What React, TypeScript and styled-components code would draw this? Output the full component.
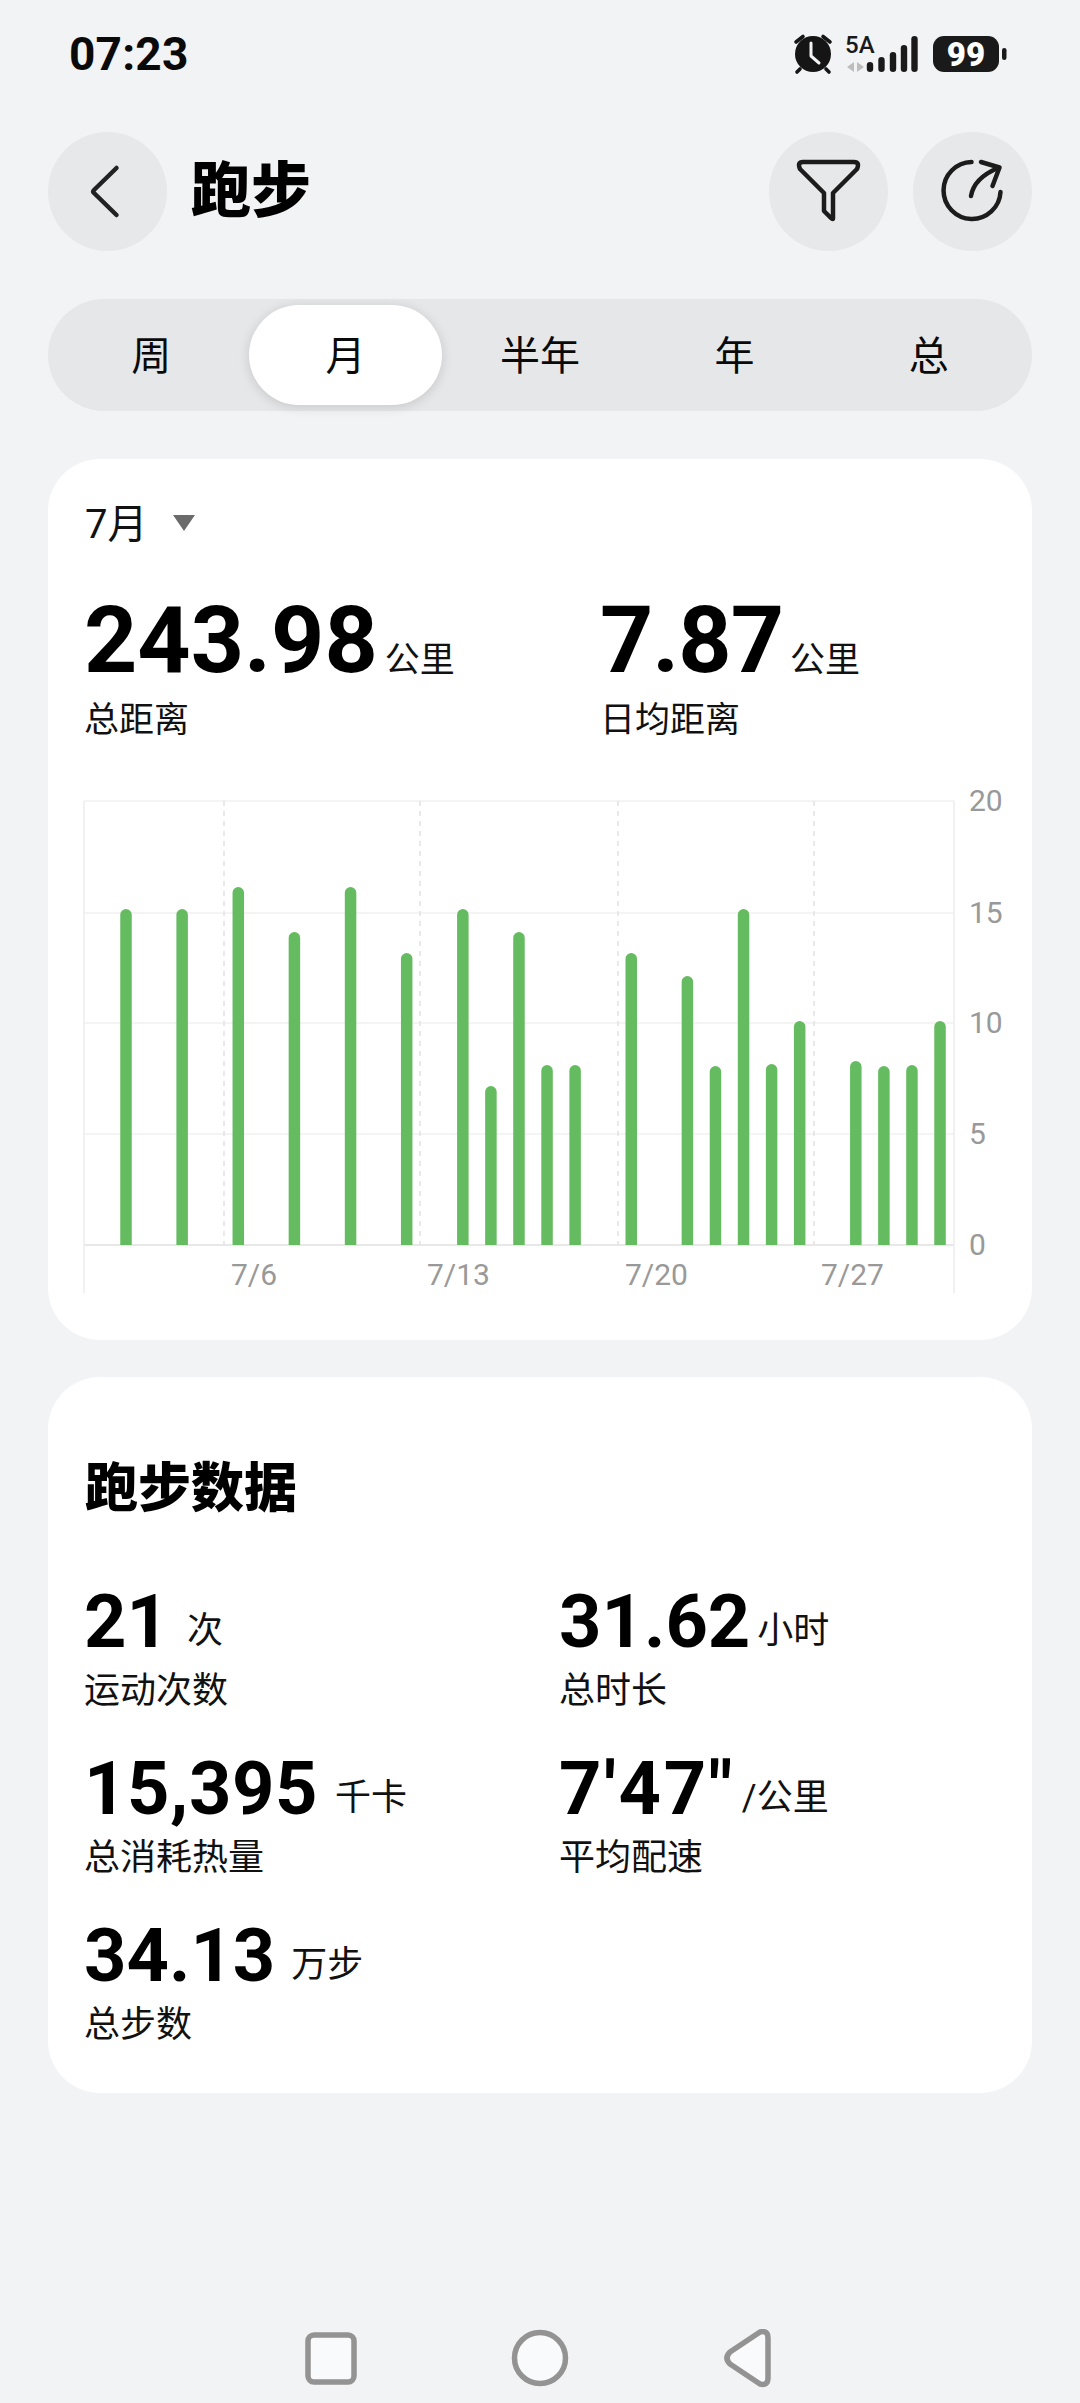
import React from 'react';
import styled, { createGlobalStyle } from 'styled-components';

const GlobalStyle = createGlobalStyle`
  html, body {
    margin: 0;
    padding: 0;
    background: #f2f3f5;
  }
  body {
    font-family: Roboto, "Noto Sans CJK SC", sans-serif;
    color: #000;
  }
`;

const Page = styled.div`
  width: 1080px;
  height: 2403px;
  display: flex;
  flex-direction: column;
  overflow: hidden;
  background: #f2f3f5;
`;

const StatusBar = styled.div`
  height: 132px;
  box-sizing: border-box;
  padding: 34px 74px 0 69px;
  display: flex;
  justify-content: space-between;
  align-items: flex-start;
`;

const Time = styled.div`
  font-size: 46px;
  line-height: 40px;
  font-weight: 700;
  letter-spacing: 0.2px;
  color: #0a0a0a;
`;

const StatusIcons = styled.div`
  display: flex;
  align-items: flex-start;
`;

const Header = styled.div`
  margin: 0 48px;
  height: 119px;
  display: flex;
  align-items: center;
`;

const RoundButton = styled.button`
  width: 119px;
  height: 119px;
  padding: 0;
  border: none;
  border-radius: 50%;
  background: #e7e8ea;
  flex-shrink: 0;
  display: block;
`;

const HeaderTitle = styled.h1`
  margin: 0 0 0 24px;
  font-size: 60px;
  line-height: 70px;
  font-weight: 900;
  flex: 1;
`;

const HeaderActions = styled.div`
  display: flex;
  gap: 25px;
`;

const Tabs = styled.div`
  margin: 48px 48px 0;
  height: 112px;
  box-sizing: border-box;
  padding: 6px;
  border-radius: 56px;
  background: #e6e7e9;
  display: grid;
  grid-template-columns: repeat(5, 1fr);
`;

const Tab = styled.div<{ $active?: boolean }>`
  margin: 0 1px;
  padding-bottom: 5px;
  border-radius: 50px;
  display: flex;
  align-items: center;
  justify-content: center;
  font-size: 40px;
  color: #0a0a0a;
  background: ${props => (props.$active ? '#fff' : 'transparent')};
  box-shadow: ${props => (props.$active ? '0 2px 12px rgba(0, 0, 0, 0.14)' : 'none')};
`;

const Card = styled.section`
  margin: 0 48px;
  background: #fff;
  border-radius: 52px;
  box-sizing: border-box;
`;

const ChartCard = styled(Card)`
  margin-top: 48px;
  height: 881px;
  padding: 40px 16px 0 36px;
`;

const MonthRow = styled.div`
  display: flex;
  align-items: center;
  height: 44px;
  font-size: 40px;
  padding-left: 1px;
  color: #111;
`;

const MonthCaret = styled.span`
  margin: 4px 0 0 26px;
  width: 0;
  height: 0;
  border-left: 11px solid transparent;
  border-right: 11px solid transparent;
  border-top: 16px solid #6b6b6b;
`;

const Summary = styled.div`
  margin-top: 48px;
  display: grid;
  grid-template-columns: 516px 1fr;
`;

const ValueLine = styled.div`
  display: flex;
  align-items: baseline;
`;

const BigValue = styled.span<{ $spacing?: number }>`
  font-size: 93px;
  line-height: 100px;
  font-weight: 700;
  letter-spacing: ${props => props.$spacing ?? 0}px;
`;

const Unit = styled.span<{ $gap?: number }>`
  margin-left: ${props => props.$gap ?? 7}px;
  font-size: 35px;
  line-height: 40px;
  color: #111;
`;

const StatUnit = styled(Unit)`
  font-size: 36px;
  transform: translateY(-4px);
`;

const Label = styled.div`
  font-size: 36px;
  line-height: 44px;
  color: #111;
`;

const SummaryLabel = styled(Label)`
  margin-top: 8px;
  font-size: 35px;
`;

const ChartSvg = styled.svg`
  display: block;
  margin-top: 47px;
  overflow: visible;
`;

const AxisText = styled.text`
  font-family: Roboto, sans-serif;
  font-size: 30px;
  fill: #999;
`;

const DataCard = styled(Card)`
  margin-top: 37px;
  height: 716px;
  padding: 80px 36px 0;
`;

const DataTitle = styled.h2`
  margin: 0;
  padding-left: 1px;
  font-size: 53px;
  line-height: 64px;
  font-weight: 900;
`;

const StatGrid = styled.div`
  margin-top: 59px;
  display: grid;
  grid-template-columns: 475px 1fr;
  grid-auto-rows: 167px;
`;

const StatValue = styled.span<{ $spacing?: number }>`
  font-size: 74px;
  line-height: 84px;
  font-weight: 700;
  letter-spacing: ${props => props.$spacing ?? 0}px;
`;

const StatLabel = styled(Label)`
  margin-top: 5px;
`;

const NavBar = styled.div`
  margin-top: auto;
  height: 74px;
`;

const NavSvg = styled.svg`
  display: block;
`;

const ChevronIcon = () => (
  <svg width="119" height="119" viewBox="0 0 119 119" fill="none" stroke="#222" strokeWidth="4.5" strokeLinecap="round" strokeLinejoin="round">
    <path d="M68.5 36 L46 58 Q44.5 59.5 46 61 L68.5 83" />
  </svg>
);

const FilterIcon = () => (
  <svg width="119" height="119" viewBox="0 0 119 119" fill="none" stroke="#1c1c1c" strokeWidth="4.5" strokeLinejoin="round" strokeLinecap="round">
    <path d="M34 30 H85 Q91 30 88 37 L64 61 V86 Q64 88 62 86 L55 79 V61 L31 37 Q28 30 34 30 Z" />
  </svg>
);

const ShareIcon = () => (
  <svg width="119" height="119" viewBox="0 0 119 119" fill="none" stroke="#1c1c1c" strokeWidth="4.5" strokeLinecap="round" strokeLinejoin="round">
    <path d="M58.5 30 A28.5 28.5 0 1 0 87.5 60" />
    <path d="M68 30 L86.5 35.5 L79.5 54" />
    <path d="M58 64 Q61 46 85 36" />
  </svg>
);

const StatusGlyphs = () => (
  <svg width="213" height="40" viewBox="793 34 213 40" overflow="visible">
    {/* alarm clock */}
    <circle cx="813" cy="54" r="18" fill="#151515" />
    <path d="M796 42 L803 36.5 M830 42 L823 36.5 M800 69 L797 72 M826 69 L829 72" stroke="#151515" strokeWidth="3.6" strokeLinecap="round" />
    <path d="M811 43 V56 L819 63" fill="none" stroke="#f2f3f5" strokeWidth="3" strokeLinecap="round" strokeLinejoin="round" />
    {/* network */}
    <text x="845" y="53" fontFamily="Roboto, sans-serif" fontSize="24" fontWeight="500" fill="#1a1a1a">5A</text>
    <path d="M854 62 V72 L847 67 Z M857 62 V72 L864 67 Z" fill="#bdbdbd" />
    {[
      [870, 62],
      [881.5, 57],
      [893, 52],
      [904, 45],
      [914.5, 36],
    ].map(([x, top]) => (
      <rect key={x} x={x - 3.2} y={top} width="6.4" height={72 - top} rx="3.2" fill="#1a1a1a" />
    ))}
    {/* battery */}
    <rect x="933" y="36" width="66" height="36" rx="11" fill="#1a1a1a" />
    <text x="966" y="66" textAnchor="middle" fontFamily="Roboto, sans-serif" fontSize="33" fontWeight="900" fill="#fff">99</text>
    <rect x="1002" y="48" width="4.5" height="12" rx="2.2" fill="#1a1a1a" />
  </svg>
);

// bars are placed by day of the month, height in px above the baseline
const bars: [number, number][] = [
  [2, 336], [4, 336], [6, 358], [8, 313], [10, 358], [12, 292], [14, 336], [15, 159],
  [16, 313], [17, 180], [18, 180], [20, 292], [22, 269], [23, 179], [24, 336], [25, 181],
  [26, 224], [28, 184], [29, 179], [30, 180], [31, 224],
];

const CHART_LEFT = 84;
const CHART_RIGHT = 954;
const BASE = 1245;
const BAR = 11.5;

const dayX = (day: number) => 126 + (day - 2) * 28.07;

const Chart = () => (
  <ChartSvg width="932" height="510" viewBox="84 790 932 510">
    {[801, 913, 1023, 1134, BASE].map(y => (
      <line
        key={y}
        x1={CHART_LEFT}
        x2={CHART_RIGHT}
        y1={y}
        y2={y}
        stroke={y === BASE ? '#e8e8e8' : '#f1f1f1'}
        strokeWidth={y === BASE ? 2 : 1.5}
      />
    ))}
    <line x1={CHART_LEFT} x2={CHART_LEFT} y1={801} y2={1293} stroke="#ececec" strokeWidth="1.5" />
    <line x1={CHART_RIGHT} x2={CHART_RIGHT} y1={801} y2={1293} stroke="#ececec" strokeWidth="1.5" />
    {[224, 420, 618, 814].map(x => (
      <line key={x} x1={x} x2={x} y1={801} y2={BASE} stroke="#e2e2e2" strokeWidth="1.5" strokeDasharray="5 5" />
    ))}
    {bars.map(([day, h]) => {
      const x = dayX(day);
      const r = BAR / 2;
      return (
        <path
          key={day}
          d={`M${x - r} ${BASE} V${BASE - h + r} A${r} ${r} 0 0 1 ${x + r} ${BASE - h + r} V${BASE} Z`}
          fill="#65bb5f"
        />
      );
    })}
    {[
      ['20', 801],
      ['15', 913],
      ['10', 1023],
      ['5', 1134],
      ['0', 1245],
    ].map(([text, y]) => (
      <AxisText key={text} x="969" y={Number(y) + 10}>{text}</AxisText>
    ))}
    {[
      ['7/6', 231],
      ['7/13', 427],
      ['7/20', 625],
      ['7/27', 821],
    ].map(([text, x]) => (
      <AxisText key={text} x={x} y="1285">{text}</AxisText>
    ))}
  </ChartSvg>
);

const stats = [
  { value: '21', unit: '次', label: '运动次数', gap: 18 },
  { value: '31.62', unit: '小时', label: '总时长', gap: 7 },
  { value: '15,395', unit: '千卡', label: '总消耗热量', gap: 17, spacing: 0.6 },
  { value: '7\'47"', unit: '/公里', label: '平均配速', gap: 7, spacing: 2.6 },
  { value: '34.13', unit: '万步', label: '总步数', gap: 16 },
];

const App: React.FC = () => (
  <Page>
    <GlobalStyle />
    <StatusBar>
      <Time>07:23</Time>
      <StatusIcons>
        <StatusGlyphs />
      </StatusIcons>
    </StatusBar>

    <Header>
      <RoundButton><ChevronIcon /></RoundButton>
      <HeaderTitle>跑步</HeaderTitle>
      <HeaderActions>
        <RoundButton><FilterIcon /></RoundButton>
        <RoundButton><ShareIcon /></RoundButton>
      </HeaderActions>
    </Header>

    <Tabs>
      <Tab>周</Tab>
      <Tab $active>月</Tab>
      <Tab>半年</Tab>
      <Tab>年</Tab>
      <Tab>总</Tab>
    </Tabs>

    <ChartCard>
      <MonthRow>
        7月
        <MonthCaret />
      </MonthRow>
      <Summary>
        <div>
          <ValueLine>
            <BigValue>243.98</BigValue>
            <Unit>公里</Unit>
          </ValueLine>
          <SummaryLabel>总距离</SummaryLabel>
        </div>
        <div>
          <ValueLine>
            <BigValue $spacing={-1}>7.87</BigValue>
            <Unit>公里</Unit>
          </ValueLine>
          <SummaryLabel>日均距离</SummaryLabel>
        </div>
      </Summary>
      <Chart />
    </ChartCard>

    <DataCard>
      <DataTitle>跑步数据</DataTitle>
      <StatGrid>
        {stats.map(stat => (
          <div key={stat.label}>
            <ValueLine>
              <StatValue $spacing={stat.spacing}>{stat.value}</StatValue>
              <StatUnit $gap={stat.gap}>{stat.unit}</StatUnit>
            </ValueLine>
            <StatLabel>{stat.label}</StatLabel>
          </div>
        ))}
      </StatGrid>
    </DataCard>

    <NavBar>
      <NavSvg width="1080" height="74" viewBox="0 2329 1080 74">
        <rect x="308" y="2335" width="46" height="47" rx="6" fill="#f9fafb" stroke="#939393" strokeWidth="5.5" />
        <circle cx="540" cy="2358" r="25.5" fill="#f9fafb" stroke="#939393" strokeWidth="5.5" />
        <path
          d="M768 2338 Q768 2330 760 2332 L730 2352 Q724 2358 730 2364 L760 2384 Q768 2386 768 2378 Z"
          fill="#f9fafb"
          stroke="#939393"
          strokeWidth="5.5"
          strokeLinejoin="round"
        />
      </NavSvg>
    </NavBar>
  </Page>
);

export default App;
